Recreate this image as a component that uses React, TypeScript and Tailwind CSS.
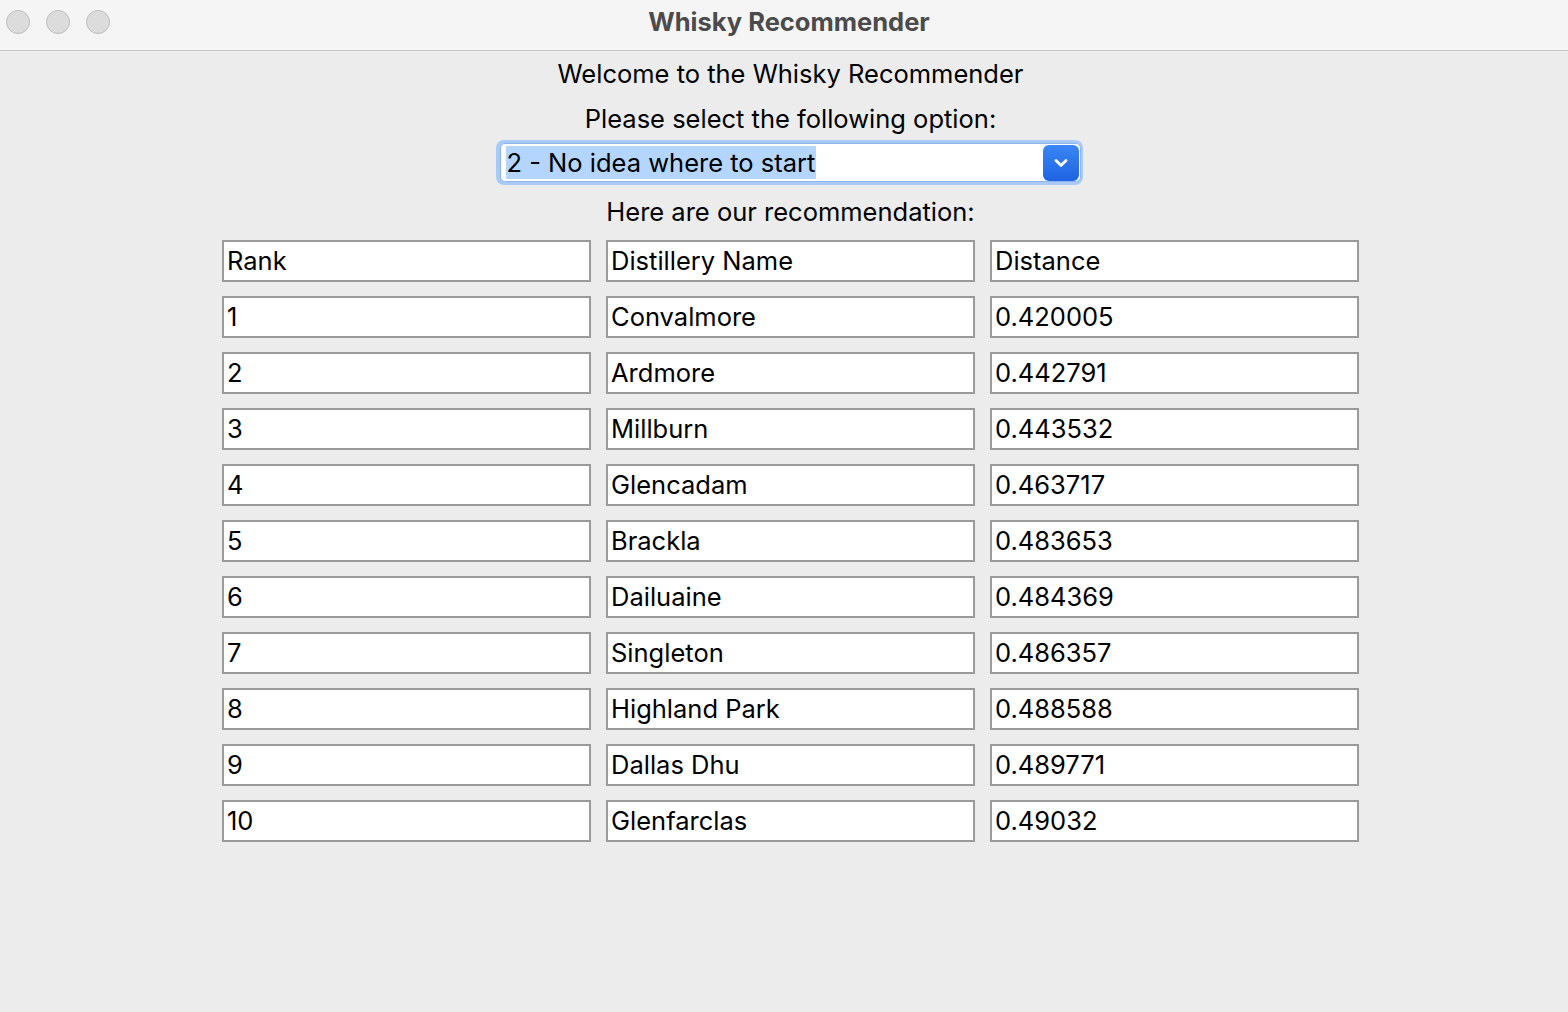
import { useState } from "react";

const rows: [string, string, string][] = [
  ["Rank", "Distillery Name", "Distance"],
  ["1", "Convalmore", "0.420005"],
  ["2", "Ardmore", "0.442791"],
  ["3", "Millburn", "0.443532"],
  ["4", "Glencadam", "0.463717"],
  ["5", "Brackla", "0.483653"],
  ["6", "Dailuaine", "0.484369"],
  ["7", "Singleton", "0.486357"],
  ["8", "Highland Park", "0.488588"],
  ["9", "Dallas Dhu", "0.489771"],
  ["10", "Glenfarclas", "0.49032"],
];

const Cell = ({ value }: { value: string }) => (
  <div className="w-[369px] h-[42px] bg-white border-2 border-[#9a9a9a] flex items-center pl-[3px] text-[25.5px] text-black leading-none">
    {value}
  </div>
);

const App = () => {
  const [option] = useState("2 - No idea where to start");

  return (
    <div className="w-[1568px] h-[1012px] bg-[#ececec] flex flex-col font-['Inter','Helvetica',sans-serif] overflow-hidden">
      {/* title bar */}
      <div className="h-[51px] bg-[#f5f5f5] border-b border-[#c6c6c6] flex items-center relative shrink-0">
        <div className="flex flex-row gap-[16px] pl-[6px] -mt-[6px]">
          <div className="w-[24px] h-[24px] rounded-full bg-[#dcdcdc] border border-[#bdbdbd]" />
          <div className="w-[24px] h-[24px] rounded-full bg-[#dcdcdc] border border-[#bdbdbd]" />
          <div className="w-[24px] h-[24px] rounded-full bg-[#dcdcdc] border border-[#bdbdbd]" />
        </div>
        <p className="absolute left-[10px] right-0 top-[3px] text-center text-[25.5px] font-bold text-[#4b4b4b]">
          Whisky Recommender
        </p>
      </div>

      <div className="flex flex-col items-center pl-[13px]">
        <p className="h-[47px] flex items-center text-[25.5px] text-black">Welcome to the Whisky Recommender</p>
        <p className="h-[42px] flex items-center text-[25.5px] text-black">Please select the following option:</p>

        <div className="w-[587px] h-[45px] rounded-[8px] bg-[#a9caf5] p-[3px] pl-[4px] pr-[2px] -ml-[3px]">
          <div className="w-full h-full rounded-[5px] bg-white border border-[#8fb6ec] flex flex-row items-center justify-between pl-[5px] pr-[1px]">
            <span className="bg-[#b4d5fe] text-[25.5px] text-black leading-[33px] px-[1px]">{option}</span>
            <div className="w-[36px] h-[36px] rounded-[6px] bg-gradient-to-b from-[#3a86f7] to-[#1f63e2] flex items-center justify-center">
              <svg width="16" height="12" viewBox="0 0 16 12" fill="none">
                <path d="M3 3.5 L8 8.5 L13 3.5" stroke="white" strokeWidth="2.8" strokeLinecap="round" strokeLinejoin="round" />
              </svg>
            </div>
          </div>
        </div>

        <p className="h-[55px] flex items-center text-[25.5px] text-black">Here are our recommendation:</p>

        <div className="flex flex-col gap-[14px]">
          {rows.map((r) => (
            <div key={r[0]} className="flex flex-row gap-[15px]">
              <Cell value={r[0]} />
              <Cell value={r[1]} />
              <Cell value={r[2]} />
            </div>
          ))}
        </div>
      </div>
    </div>
  );
};

export default App;
